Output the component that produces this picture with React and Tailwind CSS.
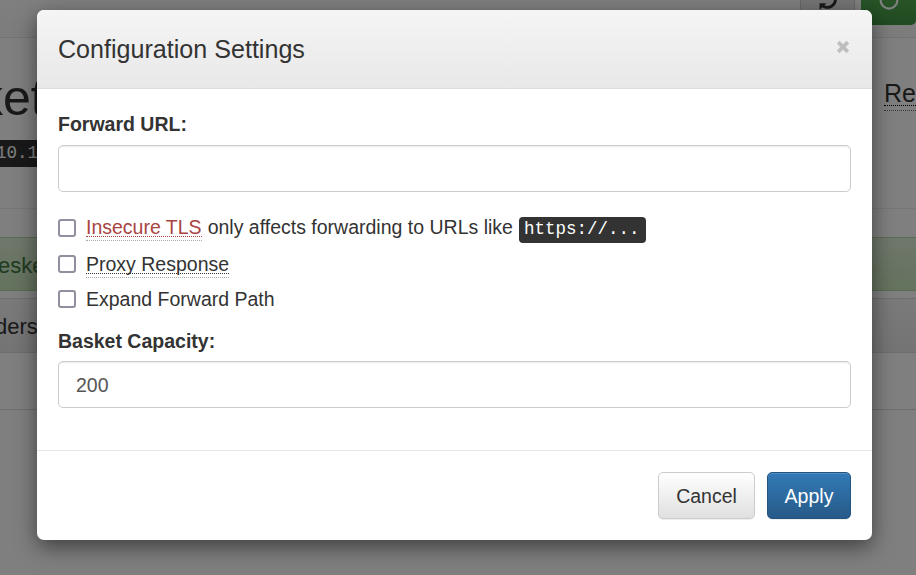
import React from "react";

function PageBehind() {
  return (
    <div className="h-[575px] w-[916px] overflow-hidden bg-white text-[#333]">
      <div className="flex h-[38px] items-start justify-end overflow-hidden border-b border-[#e7e7e7] bg-gradient-to-b from-white to-[#f8f8f8]">
        <div className="flex h-[25px] w-[55px] items-start justify-center overflow-hidden rounded-b-[5px] border border-t-0 border-[#ccc] bg-[#e8e8e8]">
          <svg width="20" height="10" viewBox="0 0 20 10" className="block">
            <path d="M1.5 9.5V3.2H8.3L6.4 5.2C10.5 7.4 15.2 4.6 16 0H19C18 8.4 9.6 10.8 4.4 7.2L2.6 9z" fill="#333" />
          </svg>
        </div>
        <div className="ml-[6px] flex h-[25px] w-[55px] items-start justify-center overflow-hidden rounded-b-[5px] bg-gradient-to-b from-[#50a850] to-[#419641]">
          <svg width="20" height="11" viewBox="0 0 20 11" className="block">
            <path d="M1.6 0a8.4 8.6 0 0 0 16.8 0" fill="none" stroke="#fff" strokeWidth="2.2" />
          </svg>
        </div>
      </div>
      <div className="flex h-[171px] justify-between border-b border-[#eee]">
        <div className="pt-[31px]">
          <div className="-ml-[22px] h-[58px] text-[50px] leading-[58px]">ket</div>
          <div className="mt-[13px] h-[27px] w-[120px] bg-[#333] font-['Liberation_Mono',monospace] text-[17.5px] leading-[26px] text-white">
            <span className="-ml-[4px]">10.1</span>
          </div>
        </div>
        <div className="w-[32px] pt-[41px]">
          <div className="h-[27px] w-[80px] border-b border-dotted border-black text-[25px] leading-[29px]">Re</div>
          <div className="mt-1 w-[80px] border-b border-dotted border-[#777]" />
        </div>
      </div>
      <div className="mt-7 h-[54px] border-y border-[#b2dba1] bg-gradient-to-b from-[#dff0d8] to-[#c8e5bc] text-[22px] leading-[56px] text-[#3c763d]">
        <span className="-ml-[2px]">eske</span>
      </div>
      <div className="mt-[7px] h-[112px] border-y border-[#ddd]">
        <div className="h-[54px] border-b border-[#ddd] bg-gradient-to-b from-[#f5f5f5] to-[#e8e8e8] text-[22px] leading-[55px]">
          <span className="-ml-[5px]">ders</span>
        </div>
      </div>
    </div>
  );
}

function Checkbox() {
  return (
    <input
      type="checkbox"
      className="mr-[10px] size-[18px] shrink-0 appearance-none rounded-[3px] border-2 border-[#8f8f9d] bg-white"
    />
  );
}

function Term({ children, className }) {
  return (
    <span className={`relative mb-[2px] block h-[21px] border-b border-dotted leading-[22px] ${className}`}>
      {children}
      <span className="absolute top-[24px] right-0 left-0 border-b border-dotted border-[#aaa]" />
    </span>
  );
}

const field =
  "block h-[47px] w-full rounded-[5px] border border-[#ccc] bg-white px-[17px] text-[19.5px] text-[#555] shadow-[inset_0_1px_1px_rgba(0,0,0,0.075)] outline-none";

function SettingsModal() {
  return (
    <div className="h-[530px] w-[835px] overflow-hidden rounded-[7px] bg-white text-[19.5px] text-[#333] shadow-[0_7px_21px_rgba(0,0,0,0.5)]">
      <div className="flex h-[79px] items-center justify-between border-b border-[#ddd] bg-gradient-to-b from-[#f5f5f5] to-[#e8e8e8] px-[21px]">
        <h4 className="text-[25.1px] leading-7">Configuration Settings</h4>
        <button className="mb-[4px] flex h-5 w-[16px] items-center justify-center">
          <svg width="14" height="14" viewBox="0 0 14 14">
            <path d="M2.2 2.2l9.6 9.6M11.8 2.2l-9.6 9.6" stroke="#bebebe" strokeWidth="3.8" />
          </svg>
        </button>
      </div>
      <div className="h-[361px] px-[21px] pt-[21px]">
        <label className="mb-[7px] block h-7 leading-[28px] font-bold">Forward URL:</label>
        <input className={field} />
        <div className="mt-[21px] flex h-[29px] items-center">
          <Checkbox />
          <Term className="border-[#a94442] text-[#a94442]">Insecure TLS</Term>
          <span className="mb-[2px] ml-[6px] leading-[22px]">only affects forwarding to URLs like</span>
          <code className="mt-[5px] ml-[6px] h-[26px] w-[127px] rounded-[4px] bg-[#333] pl-[5px] font-['Liberation_Mono',monospace] text-[17.5px] leading-[24px] text-white">
            https://...
          </code>
        </div>
        <div className="mt-[8px] flex h-[28px] items-center">
          <Checkbox />
          <Term className="border-[#333]">Proxy Response</Term>
        </div>
        <div className="mt-[7px] flex h-7 items-center">
          <Checkbox />
          <span className="pt-[2px]">Expand Forward Path</span>
        </div>
        <label className="mt-[14px] mb-[6px] block h-7 leading-[28px] font-bold">Basket Capacity:</label>
        <input className={`${field} pt-[1px]`} defaultValue="200" />
      </div>
      <div className="flex h-[90px] justify-end gap-3 border-t border-[#e5e5e5] px-[21px] pt-[21px]">
        <button className="h-[47px] w-[97px] rounded-[5px] border border-[#ccc] bg-gradient-to-b from-white to-[#e0e0e0] pt-[2px] shadow-[inset_0_1px_0_rgba(255,255,255,0.15),0_1px_1px_rgba(0,0,0,0.075)]">
          Cancel
        </button>
        <button className="h-[47px] w-[84px] rounded-[5px] border border-[#245580] bg-gradient-to-b from-[#337ab7] to-[#265a88] pt-[2px] text-white shadow-[inset_0_1px_0_rgba(255,255,255,0.15),0_1px_1px_rgba(0,0,0,0.075)]">
          Apply
        </button>
      </div>
    </div>
  );
}

export default function App() {
  return (
    <div className="relative h-[575px] w-[916px] overflow-hidden font-['Liberation_Sans',Arial,sans-serif]">
      <PageBehind />
      <div className="absolute inset-0 bg-black/50 pt-[10px] pl-[37px]">
        <SettingsModal />
      </div>
    </div>
  );
}
